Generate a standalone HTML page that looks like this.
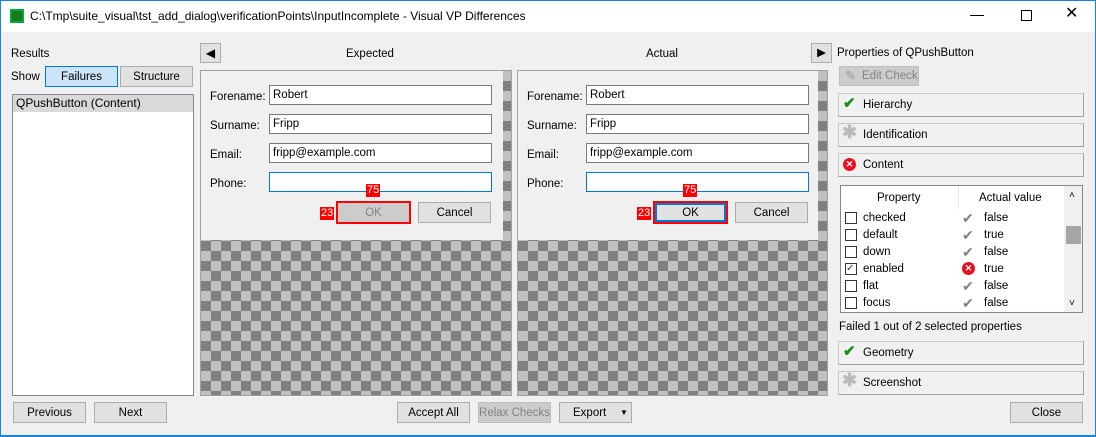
<!DOCTYPE html>
<html><head><style>
*{box-sizing:border-box;margin:0;padding:0}
body{width:1096px;height:437px;overflow:hidden;background:#f0f0f0;font-family:"Liberation Sans",sans-serif;font-size:11.5px;line-height:16px;color:#000;position:relative}
.a{position:absolute;white-space:nowrap}
.btn{position:absolute;white-space:nowrap;background:#e1e1e1;border:1px solid #adadad;text-align:center;line-height:20px;font-size:11.5px}
.chk{background-color:#c0c0c0;background-image:linear-gradient(45deg,#808080 25%,transparent 25%,transparent 75%,#808080 75%),linear-gradient(45deg,#808080 25%,transparent 25%,transparent 75%,#808080 75%);background-size:20px 20px;background-position:0 0,10px 10px}
.inp{position:absolute;background:#fff;border:1px solid #7a7a7a;height:20px;padding-left:3px;line-height:19px;white-space:nowrap}
.lbl{position:absolute;white-space:nowrap}
.sec{position:absolute;left:838px;width:246px;height:24px;background:#f0f0f0;border:1px solid #c8c8c8;border-bottom-color:#a0a0a0;border-right-color:#a0a0a0;line-height:23px;padding-left:24px}
.red{position:absolute;background:#f00;color:#fff;font-size:11px;line-height:13px;padding:0 1px}
.cb{position:absolute;left:845px;width:12px;height:12px;border:1px solid #333;background:#fff}
.gc{position:absolute;left:962px;color:#808080;font-size:14px;line-height:14px}
</style></head><body>
<div class="a" style="left:0;top:0;width:1096px;height:437px;border:1px solid #1883d7;border-top:none"></div>
<div class="a" style="left:0;top:0;width:1096px;height:32px;background:#fff;border:1px solid #1883d7;border-bottom:none"></div>
<div class="a" style="left:10px;top:9px;width:14px;height:14px;background:#1a7a1a;border:2px solid #0a4;"></div>
<div class="a" style="left:30px;top:8px;font-size:12px">C:\Tmp\suite_visual\tst_add_dialog\verificationPoints\InputIncomplete - Visual VP Differences</div>
<div class="a" style="left:970px;top:15px;width:14px;height:1px;background:#000"></div>
<div class="a" style="left:1021px;top:10px;width:11px;height:11px;border:1px solid #000"></div>
<div class="a" style="left:1065px;top:6px;font-size:16px">&#x2715;</div>
<div class="a" style="left:0;top:435px;width:1096px;height:2px;background:#1883d7"></div>

<div class="a" style="left:11px;top:46px">Results</div>
<div class="a" style="left:11px;top:69px">Show</div>
<div class="btn" style="left:45px;top:66px;width:73px;height:21px;background:#cce4f7;border-color:#0078d7">Failures</div>
<div class="btn" style="left:120px;top:66px;width:73px;height:21px">Structure</div>
<div class="a" style="left:12px;top:94px;width:182px;height:302px;background:#fff;border:1px solid #828790"></div>
<div class="a" style="left:13px;top:95px;width:180px;height:17px;background:#d9d9d9;padding-left:3px;line-height:17px;font-size:12px">QPushButton (Content)</div>

<div class="btn" style="left:200px;top:43px;width:21px;height:20px;font-size:12px;line-height:18px">&#9664;</div>
<div class="a" style="left:346px;top:46px">Expected</div>
<div class="a" style="left:646px;top:46px">Actual</div>
<div class="btn" style="left:811px;top:43px;width:21px;height:20px;line-height:18px">&#9654;</div>

<div class="a chk" style="left:200px;top:70px;width:312px;height:326px;border:1px solid #a0a0a0"></div>
<div class="a" style="left:201px;top:71px;width:302px;height:169px;background:#f0f0f0"></div>
<div class="a chk" style="left:517px;top:70px;width:311px;height:326px;border:1px solid #a0a0a0"></div>
<div class="a" style="left:518px;top:71px;width:300px;height:169px;background:#f0f0f0"></div>

<div class="lbl" style="left:210px;top:89px">Forename:</div><div class="inp" style="left:269px;top:85px;width:223px">Robert</div>
<div class="lbl" style="left:210px;top:118px">Surname:</div><div class="inp" style="left:269px;top:114px;width:223px">Fripp</div>
<div class="lbl" style="left:210px;top:147px">Email:</div><div class="inp" style="left:269px;top:143px;width:223px">fripp@example.com</div>
<div class="lbl" style="left:210px;top:176px">Phone:</div><div class="inp" style="left:269px;top:172px;width:223px;border-color:#0078d7"></div>
<div class="red" style="left:366px;top:184px">75</div>
<div class="red" style="left:320px;top:207px">23</div>
<div class="btn" style="left:336px;top:201px;width:75px;height:23px;border:2px solid #f00;background:#ccc;color:#838383">OK</div>
<div class="btn" style="left:418px;top:202px;width:73px;height:21px">Cancel</div>

<div class="lbl" style="left:527px;top:89px">Forename:</div><div class="inp" style="left:586px;top:85px;width:223px">Robert</div>
<div class="lbl" style="left:527px;top:118px">Surname:</div><div class="inp" style="left:586px;top:114px;width:223px">Fripp</div>
<div class="lbl" style="left:527px;top:147px">Email:</div><div class="inp" style="left:586px;top:143px;width:223px">fripp@example.com</div>
<div class="lbl" style="left:527px;top:176px">Phone:</div><div class="inp" style="left:586px;top:172px;width:223px;border-color:#0078d7"></div>
<div class="red" style="left:683px;top:184px">75</div>
<div class="red" style="left:637px;top:207px">23</div>
<div class="btn" style="left:653px;top:201px;width:75px;height:23px;border:2px solid #f00;box-shadow:inset 0 0 0 2px #0078d7;background:#e1e1e1">OK</div>
<div class="btn" style="left:735px;top:202px;width:73px;height:21px">Cancel</div>

<div class="a" style="left:837px;top:45px">Properties of QPushButton</div>
<div class="btn" style="left:839px;top:66px;width:80px;height:20px;background:#ccc;border-color:#bfbfbf;color:#838383;text-align:left;padding-left:22px;line-height:18px">Edit Check</div>
<div class="a" style="left:845px;top:68px;color:#999;font-size:13px">&#x270E;</div>
<div class="sec" style="top:93px">Hierarchy</div><div class="a" style="left:843px;top:96px;color:#1a8f1a;font-size:15px;font-weight:bold">&#x2714;</div>
<div class="sec" style="top:123px">Identification</div><div class="a" style="left:842px;top:124px;color:#bbb;font-size:18px;font-weight:bold">&#x2731;</div>
<div class="sec" style="top:153px">Content</div><div class="a" style="left:843px;top:158px;width:13px;height:13px;border-radius:50%;background:#e81123;color:#fff;font-size:9px;line-height:13px;text-align:center;font-weight:bold">&#x2715;</div>

<div class="a" style="left:840px;top:185px;width:243px;height:128px;background:#fff;border:1px solid #828790"></div>
<div class="a" style="left:877px;top:190px">Property</div>
<div class="a" style="left:958px;top:186px;width:1px;height:23px;background:#e5e5e5"></div>
<div class="a" style="left:979px;top:190px">Actual value</div>
<div class="a" style="left:1064px;top:186px;width:18px;height:126px;background:#f0f0f0"></div>
<div class="a" style="left:1069px;top:188px;font-size:10px">&#x2C4;</div>
<div class="a" style="left:1066px;top:226px;width:15px;height:18px;background:#a6a6a6"></div>
<div class="a" style="left:1069px;top:296px;font-size:10px">&#x2C5;</div>

<div class="cb" style="top:212px"></div><div class="a" style="left:863px;top:210px">checked</div><div class="gc" style="top:211px">&#x2714;</div><div class="a" style="left:984px;top:210px">false</div>
<div class="cb" style="top:229px"></div><div class="a" style="left:863px;top:227px">default</div><div class="gc" style="top:228px">&#x2714;</div><div class="a" style="left:984px;top:227px">true</div>
<div class="cb" style="top:246px"></div><div class="a" style="left:863px;top:244px">down</div><div class="gc" style="top:245px">&#x2714;</div><div class="a" style="left:984px;top:244px">false</div>
<div class="cb" style="top:263px;font-size:10px;line-height:10px;color:#333">&#x2713;</div><div class="a" style="left:863px;top:261px">enabled</div><div class="a" style="left:962px;top:262px;width:13px;height:13px;border-radius:50%;background:#e81123;color:#fff;font-size:9px;line-height:13px;text-align:center;font-weight:bold">&#x2715;</div><div class="a" style="left:984px;top:261px">true</div>
<div class="cb" style="top:280px"></div><div class="a" style="left:863px;top:278px">flat</div><div class="gc" style="top:279px">&#x2714;</div><div class="a" style="left:984px;top:278px">false</div>
<div class="cb" style="top:297px"></div><div class="a" style="left:863px;top:295px">focus</div><div class="gc" style="top:296px">&#x2714;</div><div class="a" style="left:984px;top:295px">false</div>

<div class="a" style="left:839px;top:319px">Failed 1 out of 2 selected properties</div>
<div class="sec" style="top:341px">Geometry</div><div class="a" style="left:843px;top:344px;color:#1a8f1a;font-size:15px;font-weight:bold">&#x2714;</div>
<div class="sec" style="top:371px">Screenshot</div><div class="a" style="left:842px;top:372px;color:#bbb;font-size:18px;font-weight:bold">&#x2731;</div>

<div class="btn" style="left:13px;top:402px;width:73px;height:21px">Previous</div>
<div class="btn" style="left:94px;top:402px;width:73px;height:21px">Next</div>
<div class="btn" style="left:397px;top:402px;width:73px;height:21px">Accept All</div>
<div class="btn" style="left:478px;top:402px;width:73px;height:21px;background:#ccc;border-color:#bfbfbf;color:#838383">Relax Checks</div>
<div class="btn" style="left:559px;top:402px;width:73px;height:21px;text-align:left;padding-left:13px">Export<span style="position:absolute;left:60px;top:0;font-size:8px">&#9660;</span></div>
<div class="btn" style="left:1010px;top:402px;width:73px;height:21px">Close</div>
</body></html>
